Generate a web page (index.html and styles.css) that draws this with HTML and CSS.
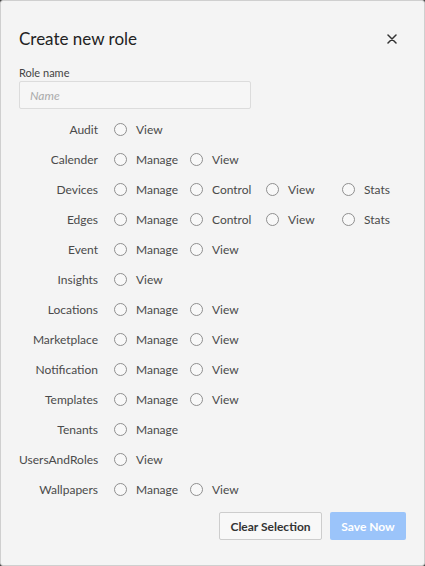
FILE: index.html
```html
<!DOCTYPE html>
<html lang="en">
<head>
    <meta charset="UTF-8">
    <meta name="viewport" content="width=device-width, initial-scale=1.0">
    <title>Create new role</title>
    <link rel="stylesheet" href="styles.css">
</head>
<body>
    <div class="dialog">
        <div class="dialog-header">
            <h1>Create new role</h1>
            <button class="close-btn" aria-label="Close">
                <svg width="10" height="10" viewBox="0 0 10 10"><path d="M1 1L9 9M9 1L1 9" stroke="#333" stroke-width="1.5" stroke-linecap="round"/></svg>
            </button>
        </div>

        <label class="field-label" for="roleName">Role name</label>
        <input type="text" id="roleName" class="name-input" placeholder="Name">

        <div class="perm-list">
            <div class="perm-row">
                <span class="perm-name">Audit</span>
                <label class="opt"><span class="radio"></span>View</label>
            </div>
            <div class="perm-row">
                <span class="perm-name">Calender</span>
                <label class="opt"><span class="radio"></span>Manage</label>
                <label class="opt"><span class="radio"></span>View</label>
            </div>
            <div class="perm-row">
                <span class="perm-name">Devices</span>
                <label class="opt"><span class="radio"></span>Manage</label>
                <label class="opt"><span class="radio"></span>Control</label>
                <label class="opt"><span class="radio"></span>View</label>
                <label class="opt"><span class="radio"></span>Stats</label>
            </div>
            <div class="perm-row">
                <span class="perm-name">Edges</span>
                <label class="opt"><span class="radio"></span>Manage</label>
                <label class="opt"><span class="radio"></span>Control</label>
                <label class="opt"><span class="radio"></span>View</label>
                <label class="opt"><span class="radio"></span>Stats</label>
            </div>
            <div class="perm-row">
                <span class="perm-name">Event</span>
                <label class="opt"><span class="radio"></span>Manage</label>
                <label class="opt"><span class="radio"></span>View</label>
            </div>
            <div class="perm-row">
                <span class="perm-name">Insights</span>
                <label class="opt"><span class="radio"></span>View</label>
            </div>
            <div class="perm-row">
                <span class="perm-name">Locations</span>
                <label class="opt"><span class="radio"></span>Manage</label>
                <label class="opt"><span class="radio"></span>View</label>
            </div>
            <div class="perm-row">
                <span class="perm-name">Marketplace</span>
                <label class="opt"><span class="radio"></span>Manage</label>
                <label class="opt"><span class="radio"></span>View</label>
            </div>
            <div class="perm-row">
                <span class="perm-name">Notification</span>
                <label class="opt"><span class="radio"></span>Manage</label>
                <label class="opt"><span class="radio"></span>View</label>
            </div>
            <div class="perm-row">
                <span class="perm-name">Templates</span>
                <label class="opt"><span class="radio"></span>Manage</label>
                <label class="opt"><span class="radio"></span>View</label>
            </div>
            <div class="perm-row">
                <span class="perm-name">Tenants</span>
                <label class="opt"><span class="radio"></span>Manage</label>
            </div>
            <div class="perm-row">
                <span class="perm-name">UsersAndRoles</span>
                <label class="opt"><span class="radio"></span>View</label>
            </div>
            <div class="perm-row">
                <span class="perm-name">Wallpapers</span>
                <label class="opt"><span class="radio"></span>Manage</label>
                <label class="opt"><span class="radio"></span>View</label>
            </div>
        </div>

        <div class="actions">
            <button class="btn btn-clear">Clear Selection</button>
            <button class="btn btn-save" disabled>Save Now</button>
        </div>
    </div>
</body>
</html>
```

FILE: styles.css
```css
body {
    margin: 0;
    padding: 0;
    background-color: #4a4a4a;
    font-family: Lato, "Open Sans", sans-serif;
    color: #333;
}

.dialog {
    box-sizing: border-box;
    width: 425px;
    height: 566px;
    padding: 0 18px;
    background-color: #f4f4f4;
    border: 1px solid #cfcfcf;
    border-radius: 3px;
}

.dialog-header {
    display: flex;
    justify-content: space-between;
    align-items: center;
    padding-top: 27px;
    height: 22px;
}

h1 {
    margin: 0;
    font-size: 17px;
    font-weight: normal;
    line-height: 22px;
    color: #222;
}

.close-btn {
    border: none;
    background: none;
    padding: 0;
    margin-right: 9px;
    width: 10px;
    height: 10px;
    display: flex;
    cursor: pointer;
}

.field-label {
    display: block;
    margin-top: 16px;
    font-size: 11px;
    line-height: 14px;
    color: #444;
}

.name-input {
    display: block;
    box-sizing: border-box;
    margin-top: 1px;
    width: 232px;
    height: 28px;
    padding: 0 10px;
    border: 1px solid #dcdcdc;
    border-radius: 2px;
    background-color: #f6f6f6;
    font-family: inherit;
    font-size: 12px;
}

.name-input::placeholder {
    font-style: italic;
    color: #aaa;
}

.perm-list {
    margin-top: 5px;
}

.perm-row {
    display: flex;
    align-items: center;
    height: 30px;
    font-size: 12px;
    color: #4a4a4a;
}

.perm-name {
    flex-shrink: 0;
    width: 79px;
    text-align: right;
    margin-right: 16px;
}

.opt {
    display: flex;
    align-items: center;
    flex-shrink: 0;
    width: 76px;
    cursor: pointer;
}

.radio {
    box-sizing: border-box;
    width: 13px;
    height: 13px;
    margin-right: 9px;
    border: 1px solid #8f8f8f;
    border-radius: 50%;
    background-color: #f8f8f8;
}

.actions {
    display: flex;
    justify-content: flex-end;
    gap: 8px;
    margin-top: 8px;
}

.btn {
    box-sizing: border-box;
    height: 28px;
    padding: 0 10px;
    border-radius: 2px;
    font-family: inherit;
    font-size: 12px;
    font-weight: bold;
    cursor: pointer;
}

.btn-clear {
    width: 103px;
    border: 1px solid #cdcdcd;
    background-color: #f8f8f8;
    color: #333;
}

.btn-save {
    width: 76px;
    border: none;
    background-color: #9bc4fa;
    color: #fff;
}
```
